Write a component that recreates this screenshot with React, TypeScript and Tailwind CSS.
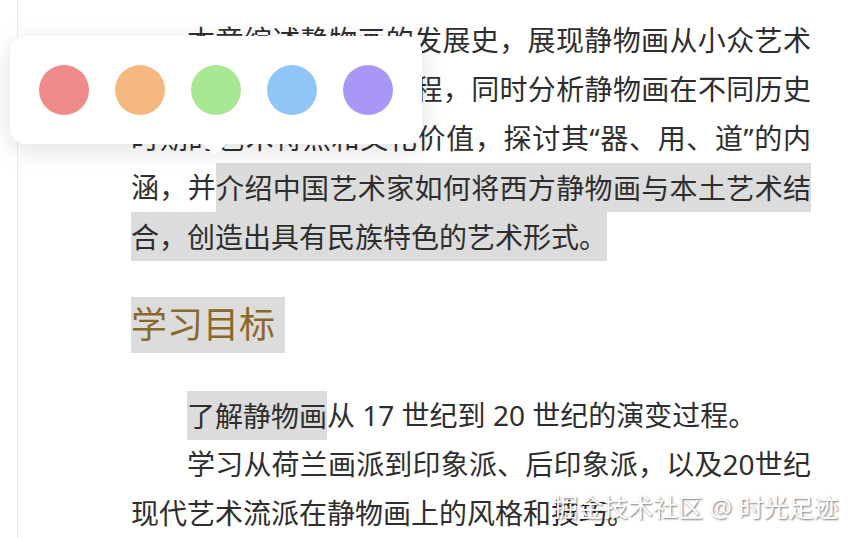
import React from "react";

const colors = ["#ef8a8a", "#f5b97f", "#a8e895", "#8fc5f7", "#a996f5"];

const ColorPicker = () => {
  return (
    <div className="absolute left-[10px] top-[36px] rounded-2xl bg-white shadow-[0_6px_28px_rgba(0,0,0,0.12)]">
      <div className="flex gap-[26px] p-[29px]">
        {colors.map((c) => (
          <button
            key={c}
            className="h-[50px] w-[50px] rounded-full"
            style={{ backgroundColor: c }}
          />
        ))}
      </div>
      <div className="absolute left-[193px] top-full h-0 w-0 border-x-[12px] border-t-[11px] border-x-transparent border-t-white" />
    </div>
  );
};

const mark = "bg-[#dcdcdc] py-[5.5px]";

const App = () => {
  return (
    <div
      className="relative h-[538px] w-[864px] overflow-hidden bg-white text-[#2e2e2e]"
      style={{ fontFamily: '"Noto Sans", "Noto Sans CJK SC", sans-serif' }}
    >
      <div className="ml-[17px] h-full border-l border-[#ececec] pl-[113px] pt-[16px]">
        <div className="w-[680px] text-[28px] leading-[49px]">
          <p className="indent-[2em] text-justify">
            本章综述静物画的发展史，展现静物画从小众艺术逐步走向主流艺术的过程，同时分析静物画在不同历史时期的艺术特点和文化价值，探讨其“器、用、道”的内涵，并
            <span className={mark}>
              介绍中国艺术家如何将西方静物画与本土艺术结合，创造出具有民族特色的艺术形式。
            </span>
          </p>

          <h2 className="mt-[36px] leading-[56px]">
            <span className="inline-block h-[56px] bg-[#dcdcdc] pr-[10px] text-[36px] leading-[56px] text-[#8a6827]">
              学习目标
            </span>
          </h2>

          <p className="mt-[36px] indent-[2em] text-justify">
            <span className={mark}>了解静物画</span>从 17 世纪到 20 世纪的演变过程。
          </p>
          <p className="indent-[2em] text-justify">
            学习从荷兰画派到印象派、后印象派，以及20世纪现代艺术流派在静物画上的风格和技巧。
          </p>
        </div>
      </div>

      <ColorPicker />

      <div className="absolute left-[553px] top-[491px] whitespace-nowrap text-[25px] leading-[32px] text-white [text-shadow:1px_1px_2px_rgba(0,0,0,0.55)]">
        掘金技术社区 @ 时光足迹
      </div>
    </div>
  );
};

export default App;
